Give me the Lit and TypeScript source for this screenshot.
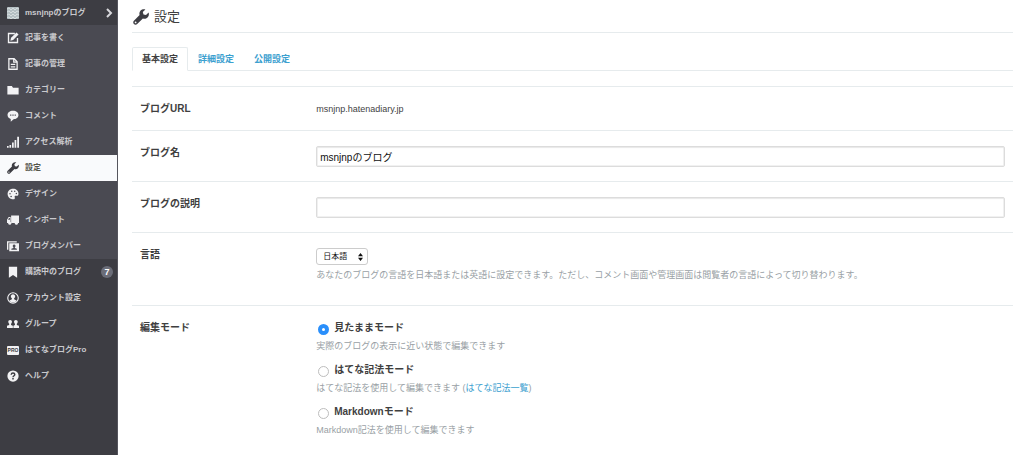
import { LitElement, html, css, svg, nothing } from "lit";
import { customElement, property, state } from "lit/decorators.js";
import { classMap } from "lit/directives/class-map.js";

const WRENCH = svg`<path fill="currentColor" d="M15.6 3.6 13 6.1l-2.500-.6-.7-2.500L12.400.4C10.700-.1 8.800.2 7.600 1.500 6.400 2.700 6.100 4.500 6.600 6L.9 11.700c-.9.9-.9 2.400 0 3.300s2.400.9 3.300 0L9.900 9.400c1.500.6 3.400.300 4.600-1C15.800 7.200 16.200 5.200 15.600 3.600zM2.600 14.300a.9.9 0 1 1 0-1.800.9.9 0 0 1 0 1.800z"/>`;

const ICONS: Record<string, unknown> = {
  wrench: WRENCH,
  write: svg`<path fill="none" stroke="currentColor" stroke-width="1.800" d="M10.500 2H2v12h12V8"/><path fill="currentColor" d="M4.500 11.500l.9-3.700L12.600.6l2.800 2.800-7.200 7.200z"/>`,
  doc: svg`<path fill="none" stroke="currentColor" stroke-width="1.700" d="M2.500 1h7l4 4v10h-11zM9 1v4.500h4.500"/><path stroke="currentColor" stroke-width="1.600" d="M5 8.500h6M5 11.700h6"/>`,
  folder: svg`<path fill="currentColor" d="M.5 2.500h6L8 5h7.500v9H.5z"/>`,
  comment: svg`<path fill="currentColor" fill-rule="evenodd" d="M8 1c4.300 0 7.300 2.500 7.300 5.700S12.300 12.300 8.800 12.300L5 15.500v-3.600C2.300 11.200.7 9.200.7 6.700.7 3.500 3.700 1 8 1zM4.200 6v1.700h1.600V6zm3 0v1.700h1.600V6zm3 0v1.700h1.600V6z"/>`,
  bars: svg`<path fill="currentColor" d="M0 13.200h2.200V15.500H0zM3.300 12h2.200v3.500H3.300zM6.700 8.800h2.300v6.700H6.700zM10.100 5.200h2.300v10.300h-2.300zM13.600 1h2.400v14.500h-2.400z"/>`,
  palette: svg`<path fill="currentColor" fill-rule="evenodd" d="M8 1c4.200 0 7.300 2.800 7.300 6.500 0 2.500-1.500 3-3.300 2.700-1.600-.2-2.200.7-1.700 2 .6 1.500 0 2.800-2 2.800C4 15 .8 12 .8 8S4 1 8 1zM4 6.500a1 1 0 1 0 0 2 1 1 0 0 0 0-2zM6.300 3.200a1 1 0 1 0 0 2 1 1 0 0 0 0-2zm4 0a1 1 0 1 0 0 2 1 1 0 0 0 0-2zM5.500 10.200a1.100 1.100 0 1 0 0 2.200 1.100 1.100 0 0 0 0-2.200zm7-4a1 1 0 1 0 0 2 1 1 0 0 0 0-2z"/>`,
  truck: svg`<path fill="currentColor" fill-rule="evenodd" d="M5.500 2H16v10H5.500zM2.200 4h2.600v8H0V7.800zM2.700 5.300 1.400 7.800h2.500V5.300z"/><circle cx="3.700" cy="12.300" r="2" fill="currentColor"/><circle cx="12.500" cy="12.300" r="2" fill="currentColor"/>`,
  members: svg`<path fill="currentColor" d="M0 1.500h13v1.800H1.800V13H0z"/><path fill="currentColor" fill-rule="evenodd" d="M3 4.300h13V15H3zM9.500 6a1.900 1.900 0 0 0-1 3.500v1.300l-2.700 1v1.200h7.400v-1.200l-2.700-1V9.500A1.900 1.900 0 0 0 9.500 6z"/>`,
  bookmark: svg`<path fill="currentColor" d="M2.500 1h11v14.500L8 12l-5.500 3.500z"/>`,
  account: svg`<circle cx="8" cy="8" r="7" fill="none" stroke="currentColor" stroke-width="1.500"/><path fill="currentColor" d="M8 3a2.900 2.900 0 0 1 1.500 5.400v1.300l3.200 1.500C11.700 13 10 14 8 14s-3.700-1-4.700-2.800l3.200-1.500V8.400A2.900 2.900 0 0 1 8 3z"/>`,
  group: svg`<path fill="currentColor" d="M4.200 2.500c1.500 0 2.400 1 2.400 2.500 0 1.200-.5 2.200-1.200 2.700v1.500l2.400 1.100v3H0v-3l2.900-1.100V7.700C2.200 7.200 1.700 6.200 1.700 5c0-1.500 1-2.500 2.500-2.500zM11.800 2.500c1.500 0 2.500 1 2.500 2.500 0 1.200-.5 2.200-1.200 2.700v1.500l2.900 1.100v3H8.500v-3l2.100-1.100V7.700C9.900 7.200 9.400 6.200 9.400 5c0-1.500.9-2.500 2.400-2.500z"/>`,
  help: svg`<circle cx="8" cy="8" r="7.500" fill="currentColor"/><path fill="none" stroke="#3d3d43" stroke-width="1.900" d="M5.600 6.300C5.700 4.700 6.700 4 8 4s2.400.8 2.400 2.100C10.400 7.700 8 7.700 8 9.800"/><path fill="#3d3d43" d="M7 10.800h2v2H7z"/>`,
};

interface Item {
  icon: string;
  label: string;
  badge?: number;
}

const BLOG_ITEMS: Item[] = [
  { icon: "write", label: "記事を書く" },
  { icon: "doc", label: "記事の管理" },
  { icon: "folder", label: "カテゴリー" },
  { icon: "comment", label: "コメント" },
  { icon: "bars", label: "アクセス解析" },
  { icon: "wrench", label: "設定" },
  { icon: "palette", label: "デザイン" },
  { icon: "truck", label: "インポート" },
  { icon: "members", label: "ブログメンバー" },
];

const USER_ITEMS: Item[] = [
  { icon: "bookmark", label: "購読中のブログ", badge: 7 },
  { icon: "account", label: "アカウント設定" },
  { icon: "group", label: "グループ" },
  { icon: "pro", label: "はてなブログPro" },
  { icon: "help", label: "ヘルプ" },
];

@customElement("side-nav")
class SideNav extends LitElement {
  @property() current = "設定";

  static styles = css`
    :host {
      display: block;
      background: #3d3d43;
      border-right: 1px solid #55555d;
      box-sizing: border-box;
      font-size: 8px;
      font-weight: 700;
      line-height: 12px;
    }
    a {
      display: flex;
      align-items: center;
      gap: 6px;
      height: 26px;
      padding: 0 4px 0 7px;
      box-sizing: border-box;
      color: #c9c9cd;
      text-decoration: none;
      white-space: nowrap;
    }
    .blog {
      height: 25px;
    }
    .avatar {
      width: 12px;
      height: 12px;
      border-radius: 1px;
    }
    .chevron {
      width: 7px;
      height: 10px;
      color: #d8d8dc;
    }
    .text {
      flex: 1;
    }
    .tools {
      background: #4a4a52;
    }
    .icon {
      width: 12px;
      height: 12px;
      flex: none;
      color: #f2f2f4;
    }
    .current {
      background: #f9fafc;
      color: #55554c;
    }
    .current .icon {
      color: #3d3d43;
    }
    .pro {
      width: 12px;
      border-radius: 1px;
      background: #f2f2f4;
      color: #3d3d43;
      font-size: 5px;
      line-height: 9px;
      text-align: center;
    }
    .badge {
      width: 12px;
      height: 12px;
      border-radius: 6px;
      background: #6b6d78;
      color: #ffffff;
      font-size: 9px;
      text-align: center;
    }
  `;

  private item(i: Item) {
    const on = i.label === this.current;
    return html`<a href="#" class=${classMap({ current: on })} aria-current=${on ? "page" : nothing}>
      ${i.icon === "pro"
        ? html`<span class="pro">PRO</span>`
        : html`<svg class="icon" viewBox="0 0 16 16" aria-hidden="true">${ICONS[i.icon]}</svg>`}
      <span class="text">${i.label}</span>
      ${i.badge ? html`<span class="badge">${i.badge}</span>` : nothing}
    </a>`;
  }

  render() {
    return html`<nav>
      <a href="#" class="blog">
        <svg class="avatar" viewBox="0 0 12 12" aria-hidden="true">
          <rect width="12" height="12" fill="#b4bfc3" />
          <path
            fill="none"
            stroke="#d5dcde"
            stroke-width="1"
            d="M0 2l2-1 2 2 2-2 2 2 2-2 2 1M0 5l2-1 2 2 2-2 2 2 2-2 2 1M0 8l2-1 2 2 2-2 2 2 2-2 2 1M0 11l2-1 2 2 2-2 2 2 2-2 2 1"
          />
        </svg>
        <span class="text">msnjnpのブログ</span>
        <svg class="chevron" viewBox="0 0 7 10" aria-hidden="true">
          <path fill="none" stroke="currentColor" stroke-width="2" d="M1 1l4 4-4 4" />
        </svg>
      </a>
      <div class="tools">${BLOG_ITEMS.map((i) => this.item(i))}</div>
      <div>${USER_ITEMS.map((i) => this.item(i))}</div>
    </nav>`;
  }
}

@customElement("settings-form")
class SettingsForm extends LitElement {
  @state() private mode = "wysiwyg";

  static styles = css`
    :host {
      display: block;
      font-size: 9px;
      line-height: 14px;
      color: #3f3f3f;
    }
    .row {
      display: grid;
      grid-template-columns: 1fr 4fr;
      margin: 0;
      border-top: 1px solid #e6ebed;
    }
    .head,
    .cell {
      padding: 15px 8px 14px;
      min-width: 0;
    }
    .head {
      font-size: 10px;
      font-weight: 700;
    }
    .language .cell {
      padding-bottom: 23px;
    }
    .text {
      display: block;
      width: 100%;
      height: 21px;
      box-sizing: border-box;
      padding: 0 3px;
      border: 1px solid #dcdcdc;
      border-radius: 2px;
      box-shadow: inset 0 1px 1px #e9e9e9, inset 0 0 0 1px #f1f1f1;
      background: #ffffff;
      color: #111111;
      font: inherit;
      font-size: 10px;
    }
    .picker {
      display: inline-grid;
      align-items: center;
      vertical-align: top;
    }
    select,
    .arrows {
      grid-area: 1 / 1;
    }
    select {
      appearance: none;
      width: 52px;
      height: 17px;
      padding: 0 6px;
      border: 1px solid #cccccc;
      border-radius: 3px;
      background: #ffffff;
      color: #111111;
      font: inherit;
      font-size: 8px;
    }
    .arrows {
      justify-self: end;
      width: 5px;
      height: 8px;
      margin-right: 5px;
      pointer-events: none;
    }
    .help {
      margin: 0;
      color: #999fa5;
    }
    .language .help {
      margin-top: 3px;
    }
    a {
      color: #3ba0cf;
      text-decoration: none;
    }
    .mode {
      display: grid;
      gap: 4px;
      padding-bottom: 10px;
    }
    .choice {
      display: flex;
      align-items: flex-start;
      gap: 5px;
      font-size: 10px;
      font-weight: 700;
    }
    input[type="radio"] {
      appearance: none;
      width: 11px;
      height: 11px;
      margin: 3px 0 0 2px;
      border: 1px solid #bdbdbd;
      border-radius: 50%;
      background: #ffffff;
    }
    input[type="radio"]:checked {
      border: 4px solid #2a8ffb;
    }
  `;

  private choice(id: string, label: string, help: unknown) {
    return html`<div class="mode">
      <label class="choice">
        <input type="radio" name="mode" .checked=${this.mode === id} @change=${() => (this.mode = id)} />
        <span>${label}</span>
      </label>
      <p class="help">${help}</p>
    </div>`;
  }

  render() {
    return html`<form>
      <div class="row">
        <div class="head">ブログURL</div>
        <div class="cell">msnjnp.hatenadiary.jp</div>
      </div>
      <div class="row">
        <label class="head" for="name">ブログ名</label>
        <div class="cell"><input class="text" id="name" type="text" value="msnjnpのブログ" /></div>
      </div>
      <div class="row">
        <label class="head" for="about">ブログの説明</label>
        <div class="cell"><input class="text" id="about" type="text" /></div>
      </div>
      <div class="row language">
        <label class="head" for="lang">言語</label>
        <div class="cell">
          <span class="picker">
            <select id="lang">
              <option>日本語</option>
              <option>English</option>
            </select>
            <svg class="arrows" viewBox="0 0 5 8" aria-hidden="true">
              <path fill="#111" d="M2.500 0L5 3.300H0zM2.500 8L0 4.700h5z" />
            </svg>
          </span>
          <p class="help">
            あなたのブログの言語を日本語または英語に設定できます。ただし、コメント画面や管理画面は閲覧者の言語によって切り替わります。
          </p>
        </div>
      </div>
      <div class="row" role="radiogroup" aria-labelledby="mode-head">
        <div class="head" id="mode-head">編集モード</div>
        <div class="cell">
          ${this.choice("wysiwyg", "見たままモード", "実際のブログの表示に近い状態で編集できます")}
          ${this.choice(
            "hatena",
            "はてな記法モード",
            html`はてな記法を使用して編集できます (<a href="#">はてな記法一覧</a>)`
          )}
          ${this.choice("markdown", "Markdownモード", "Markdown記法を使用して編集できます")}
        </div>
      </div>
    </form>`;
  }
}

@customElement("app-root")
class AppRoot extends LitElement {
  static styles = css`
    :host {
      display: grid;
      grid-template-columns: 118px 1fr;
      min-height: 100vh;
      background: #ffffff;
      color: #3f3f3f;
      font-family: "Liberation Sans", "Noto Sans CJK JP", sans-serif;
    }
    main {
      min-width: 0;
      padding: 0 11px 0 14px;
    }
    h1 {
      display: flex;
      align-items: center;
      gap: 5px;
      height: 33px;
      margin: 0 0 14px;
      padding: 2px 1px 0;
      box-sizing: border-box;
      font-size: 13px;
      font-weight: 400;
      line-height: 20px;
      border-bottom: 1px solid #e6ebed;
    }
    .wrench {
      width: 16px;
      height: 16px;
      color: #3d3d43;
    }
    .tabs {
      display: flex;
      margin-bottom: 15px;
      border-bottom: 1px solid #e6ebed;
      font-size: 9px;
      font-weight: 700;
      line-height: 14px;
    }
    .tab {
      margin-bottom: -1px;
      padding: 4px 9px;
      border: 1px solid transparent;
      border-radius: 2px 2px 0 0;
      color: #3ba0cf;
      text-decoration: none;
    }
    .on {
      border-color: #e6ebed #e6ebed #ffffff;
      color: #3f3f3f;
    }
  `;

  render() {
    return html`
      <side-nav></side-nav>
      <main>
        <h1>
          <svg class="wrench" viewBox="0 0 16 16" aria-hidden="true">${WRENCH}</svg>
          設定
        </h1>
        <nav class="tabs">
          <a class="tab on" href="#" aria-current="page">基本設定</a>
          <a class="tab" href="#">詳細設定</a>
          <a class="tab" href="#">公開設定</a>
        </nav>
        <settings-form></settings-form>
      </main>
    `;
  }
}
